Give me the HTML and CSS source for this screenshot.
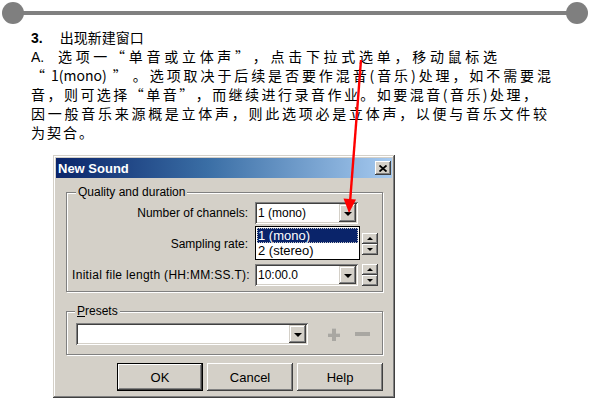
FILE: index.html
```html
<!DOCTYPE html>
<html lang="zh-CN">
<head>
<meta charset="utf-8">
<link rel="stylesheet" href="styles.css">
</head>
<body>
<div class="page">
  <div class="rule"><span class="dot"></span><span class="bar"></span><span class="dot"></span></div>
  <div class="text">
    <div class="ln"><b class="num">3.</b>出现新建窗口</div>
    <div class="ln jl l2"><span class="num2">A.</span>选项一<span class="q">“</span>单音或立体声<span class="q">”</span>，点击下拉式选单，移动鼠标选</div>
    <div class="ln jl l3"><span class="q">“</span> 1(mono) <span class="q">”</span> 。选项取决于后续是否要作混音(音乐)处理，如不需要混</div>
    <div class="ln jl l4">音，则可选择<span class="q">“</span>单音<span class="q">”</span>，而继续进行录音作业。如要混音(音乐)处理，</div>
    <div class="ln jl l5">因一般音乐来源概是立体声，则此选项必是立体声，以便与音乐文件较</div>
    <div class="ln l6">为契合。</div>
  </div>

  <div class="dialog">
    <div class="titlebar">
      <span class="title">New Sound</span>
      <span class="close"><svg width="8" height="7" viewBox="0 0 8 7"><path d="M0.5 0.5 L7.5 6.5 M7.5 0.5 L0.5 6.5" stroke="#000" stroke-width="1.8"/></svg></span>
    </div>
    <div class="dbody">
      <div class="group g1">
        <span class="glabel">Quality and duration</span>
        <div class="grid">
          <span class="lbl">Number of channels:</span>
          <div class="combo"><span class="val">1 (mono)</span><span class="ddbtn"><i class="tri"></i></span></div>
          <span></span>
          <span class="lbl">Sampling rate:</span>
          <div class="combo"><span class="val"></span><span class="ddbtn"><i class="tri"></i></span></div>
          <div class="spin"><span class="sbtn"><i class="up"></i></span><span class="sbtn"><i class="dn"></i></span></div>
          <span class="lbl wide-lbl">Initial file length (HH:MM:SS.T):</span>
          <div class="combo"><span class="val">10:00.0</span><span class="ddbtn"><i class="tri"></i></span></div>
          <div class="spin"><span class="sbtn"><i class="up"></i></span><span class="sbtn"><i class="dn"></i></span></div>
        </div>
        <div class="list">
          <div class="item sel">1 (mono)</div>
          <div class="item">2 (stereo)</div>
        </div>
      </div>
      <div class="group g2">
        <span class="glabel pl"><u>P</u>resets</span>
        <div class="prow">
          <div class="combo wide"><span class="val"></span><span class="ddbtn"><i class="tri"></i></span></div>
          <svg class="plus" width="14" height="15" viewBox="0 0 14 15"><path d="M5 1h4v5h4v4H9v4H5v-4H1V6h4z" fill="#a9a7a2"/><path d="M5 1h4v1H5zM1 6h4v1H1zM9 6h4v1H9z" fill="#c4c2bc"/></svg>
          <svg class="minus" width="15" height="5" viewBox="0 0 15 5"><rect x="0" y="0" width="15" height="4" fill="#a9a7a2"/></svg>
        </div>
      </div>
      <div class="buttons">
        <span class="btn def"><span class="inner">OK</span></span>
        <span class="btn"><span class="inner">Cancel</span></span>
        <span class="btn"><span class="inner">Help</span></span>
      </div>
    </div>
  </div>

  <svg class="arrow" width="590" height="402" viewBox="0 0 590 402">
    <line x1="361" y1="60" x2="350.2" y2="200" stroke="#ff0000" stroke-width="2.4"/>
    <polygon points="343.5,198.5 356,199.5 349,213" fill="#ff0000"/>
  </svg>
</div>
</body>
</html>
```

FILE: styles.css
```css
html, body {
  margin: 0;
  padding: 0;
  background: #fff;
}
.page {
  position: relative;
  width: 590px;
  height: 402px;
  overflow: hidden;
  font-family: "Noto Sans CJK SC", "Liberation Sans", sans-serif;
}
.rule {
  display: flex;
  align-items: center;
  height: 26px;
  padding: 0 2px;
}
.dot {
  width: 22px;
  height: 22px;
  border-radius: 50%;
  background: #7f7f7f;
  flex: none;
  position: relative;
  z-index: 1;
}
.bar {
  flex: 1;
  height: 4px;
  background: #808080;
  margin: 0 -3px;
}
.text {
  margin-top: 2px;
  padding-left: 31px;
  font-size: 14px;
  line-height: 19px;
  color: #000;
}
.ln {
  white-space: nowrap;
  height: 19px;
}
.jl {
  text-align: justify;
  text-align-last: justify;
  white-space: normal;
  overflow: hidden;
  text-spacing-trim: space-all;
}
.q {
  font-feature-settings: "fwid" 1;
}
.l2 { width: 466px; }
.l3 { width: 520px; }
.l4 { width: 506px; }
.l5 { width: 516px; }
.l6 { letter-spacing: 2px; }
.num {
  font-family: "Liberation Sans", sans-serif;
  font-weight: bold;
  margin-right: 17px;
}
.num2 {
  font-family: "Liberation Sans", sans-serif;
  margin-right: 10px;
}

/* dialog */
.dialog {
  margin: 13px 0 0 53px;
  width: 342px;
  box-sizing: border-box;
  padding: 3px;
  background: #d4d0c8;
  box-shadow: inset -1px -1px #404040, inset 1px 1px #d4d0c8, inset -2px -2px #808080, inset 2px 2px #fff;
  font-family: "Liberation Sans", sans-serif;
  font-size: 12px;
  color: #000;
}
.titlebar {
  height: 20px;
  display: flex;
  align-items: center;
  justify-content: space-between;
  padding: 0 1px 0 2px;
  background: linear-gradient(to right, #0a246a 0%, #3a6ea5 45%, #a6caf0 100%);
}
.title {
  color: #fff;
  font-weight: bold;
  font-size: 13px;
}
.close {
  width: 16px;
  height: 14px;
  display: flex;
  align-items: center;
  justify-content: center;
  background: #d4d0c8;
  box-shadow: inset -1px -1px #404040, inset 1px 1px #fff, inset -2px -2px #808080;
}
.dbody {
  padding: 14px 9px 4px 10px;
}
.group {
  position: relative;
  border: 1px solid #808080;
  box-shadow: inset 1px 1px #fff, 1px 1px #fff;
}
.glabel {
  position: absolute;
  top: -8px;
  left: 9px;
  padding: 0 2px;
  line-height: 14px;
  background: #d4d0c8;
}
.glabel.pl { left: 8px; }
.g1 {
  padding: 9px 5px 5px 5px;
}
.grid {
  display: grid;
  grid-template-columns: 179px 103px 16px;
  grid-auto-rows: 22px;
  column-gap: 4px;
  row-gap: 9px;
}
.lbl {
  text-align: right;
  align-self: center;
  padding-right: 3px;
  white-space: nowrap;
}
.wide-lbl {
  letter-spacing: 0.3px;
  padding-right: 1px;
}
.combo {
  display: flex;
  align-items: stretch;
  background: #fff;
  padding: 2px;
  box-shadow: inset 1px 1px #808080, inset -1px -1px #fff, inset 2px 2px #404040, inset -2px -2px #d4d0c8;
}
.val {
  flex: 1;
  display: flex;
  align-items: center;
  padding-left: 1px;
  white-space: nowrap;
}
.ddbtn {
  width: 17px;
  flex: none;
  display: flex;
  align-items: center;
  justify-content: center;
  background: #d4d0c8;
  box-shadow: inset -1px -1px #404040, inset 1px 1px #d4d0c8, inset -2px -2px #808080, inset 2px 2px #fff;
}
.tri {
  width: 0;
  height: 0;
  border-left: 4px solid transparent;
  border-right: 4px solid transparent;
  border-top: 4px solid #000;
  margin-top: 1px;
}
.spin {
  display: flex;
  flex-direction: column;
  gap: 0;
}
.sbtn {
  height: 11px;
  display: flex;
  align-items: center;
  justify-content: center;
  background: #d4d0c8;
  box-shadow: inset -1px -1px #404040, inset 1px 1px #fff, inset -2px -2px #808080;
}
.up, .dn {
  width: 0;
  height: 0;
  border-left: 3px solid transparent;
  border-right: 3px solid transparent;
}
.up { border-bottom: 3px solid #000; }
.dn { border-top: 3px solid #000; }
.list {
  position: absolute;
  left: 188px;
  top: 33px;
  width: 105px;
  box-sizing: border-box;
  border: 1px solid #000;
  background: #fff;
  padding: 1px 1px;
}
.item {
  height: 15px;
  line-height: 15px;
  padding-left: 1px;
  font-size: 13px;
}
.item.sel {
  background: #0a246a;
  color: #fff;
  outline: 1px dotted #c8c8c8;
  outline-offset: -1px;
}
.g2 {
  margin-top: 19px;
  padding: 11px 9px 9px 9px;
}
.prow {
  display: flex;
  align-items: center;
}
.combo.wide {
  width: 232px;
  height: 22px;
  box-sizing: border-box;
}
.plus { margin-left: 19px; }
.minus { margin-left: 14px; margin-top: 1px; }
.buttons {
  margin-top: 8px;
  display: flex;
  gap: 4px;
  padding-left: 51px;
}
.btn {
  width: 87px;
  height: 28px;
  box-sizing: border-box;
  display: flex;
  background: #d4d0c8;
  box-shadow: inset -1px -1px #404040, inset 1px 1px #fff, inset -2px -2px #808080, inset 2px 2px #d4d0c8;
}
.btn .inner {
  flex: 1;
  display: flex;
  align-items: center;
  justify-content: center;
  font-size: 13px;
}
.btn.def {
  border: 1px solid #000;
}
.arrow {
  position: absolute;
  left: 0;
  top: 0;
  pointer-events: none;
}
```
